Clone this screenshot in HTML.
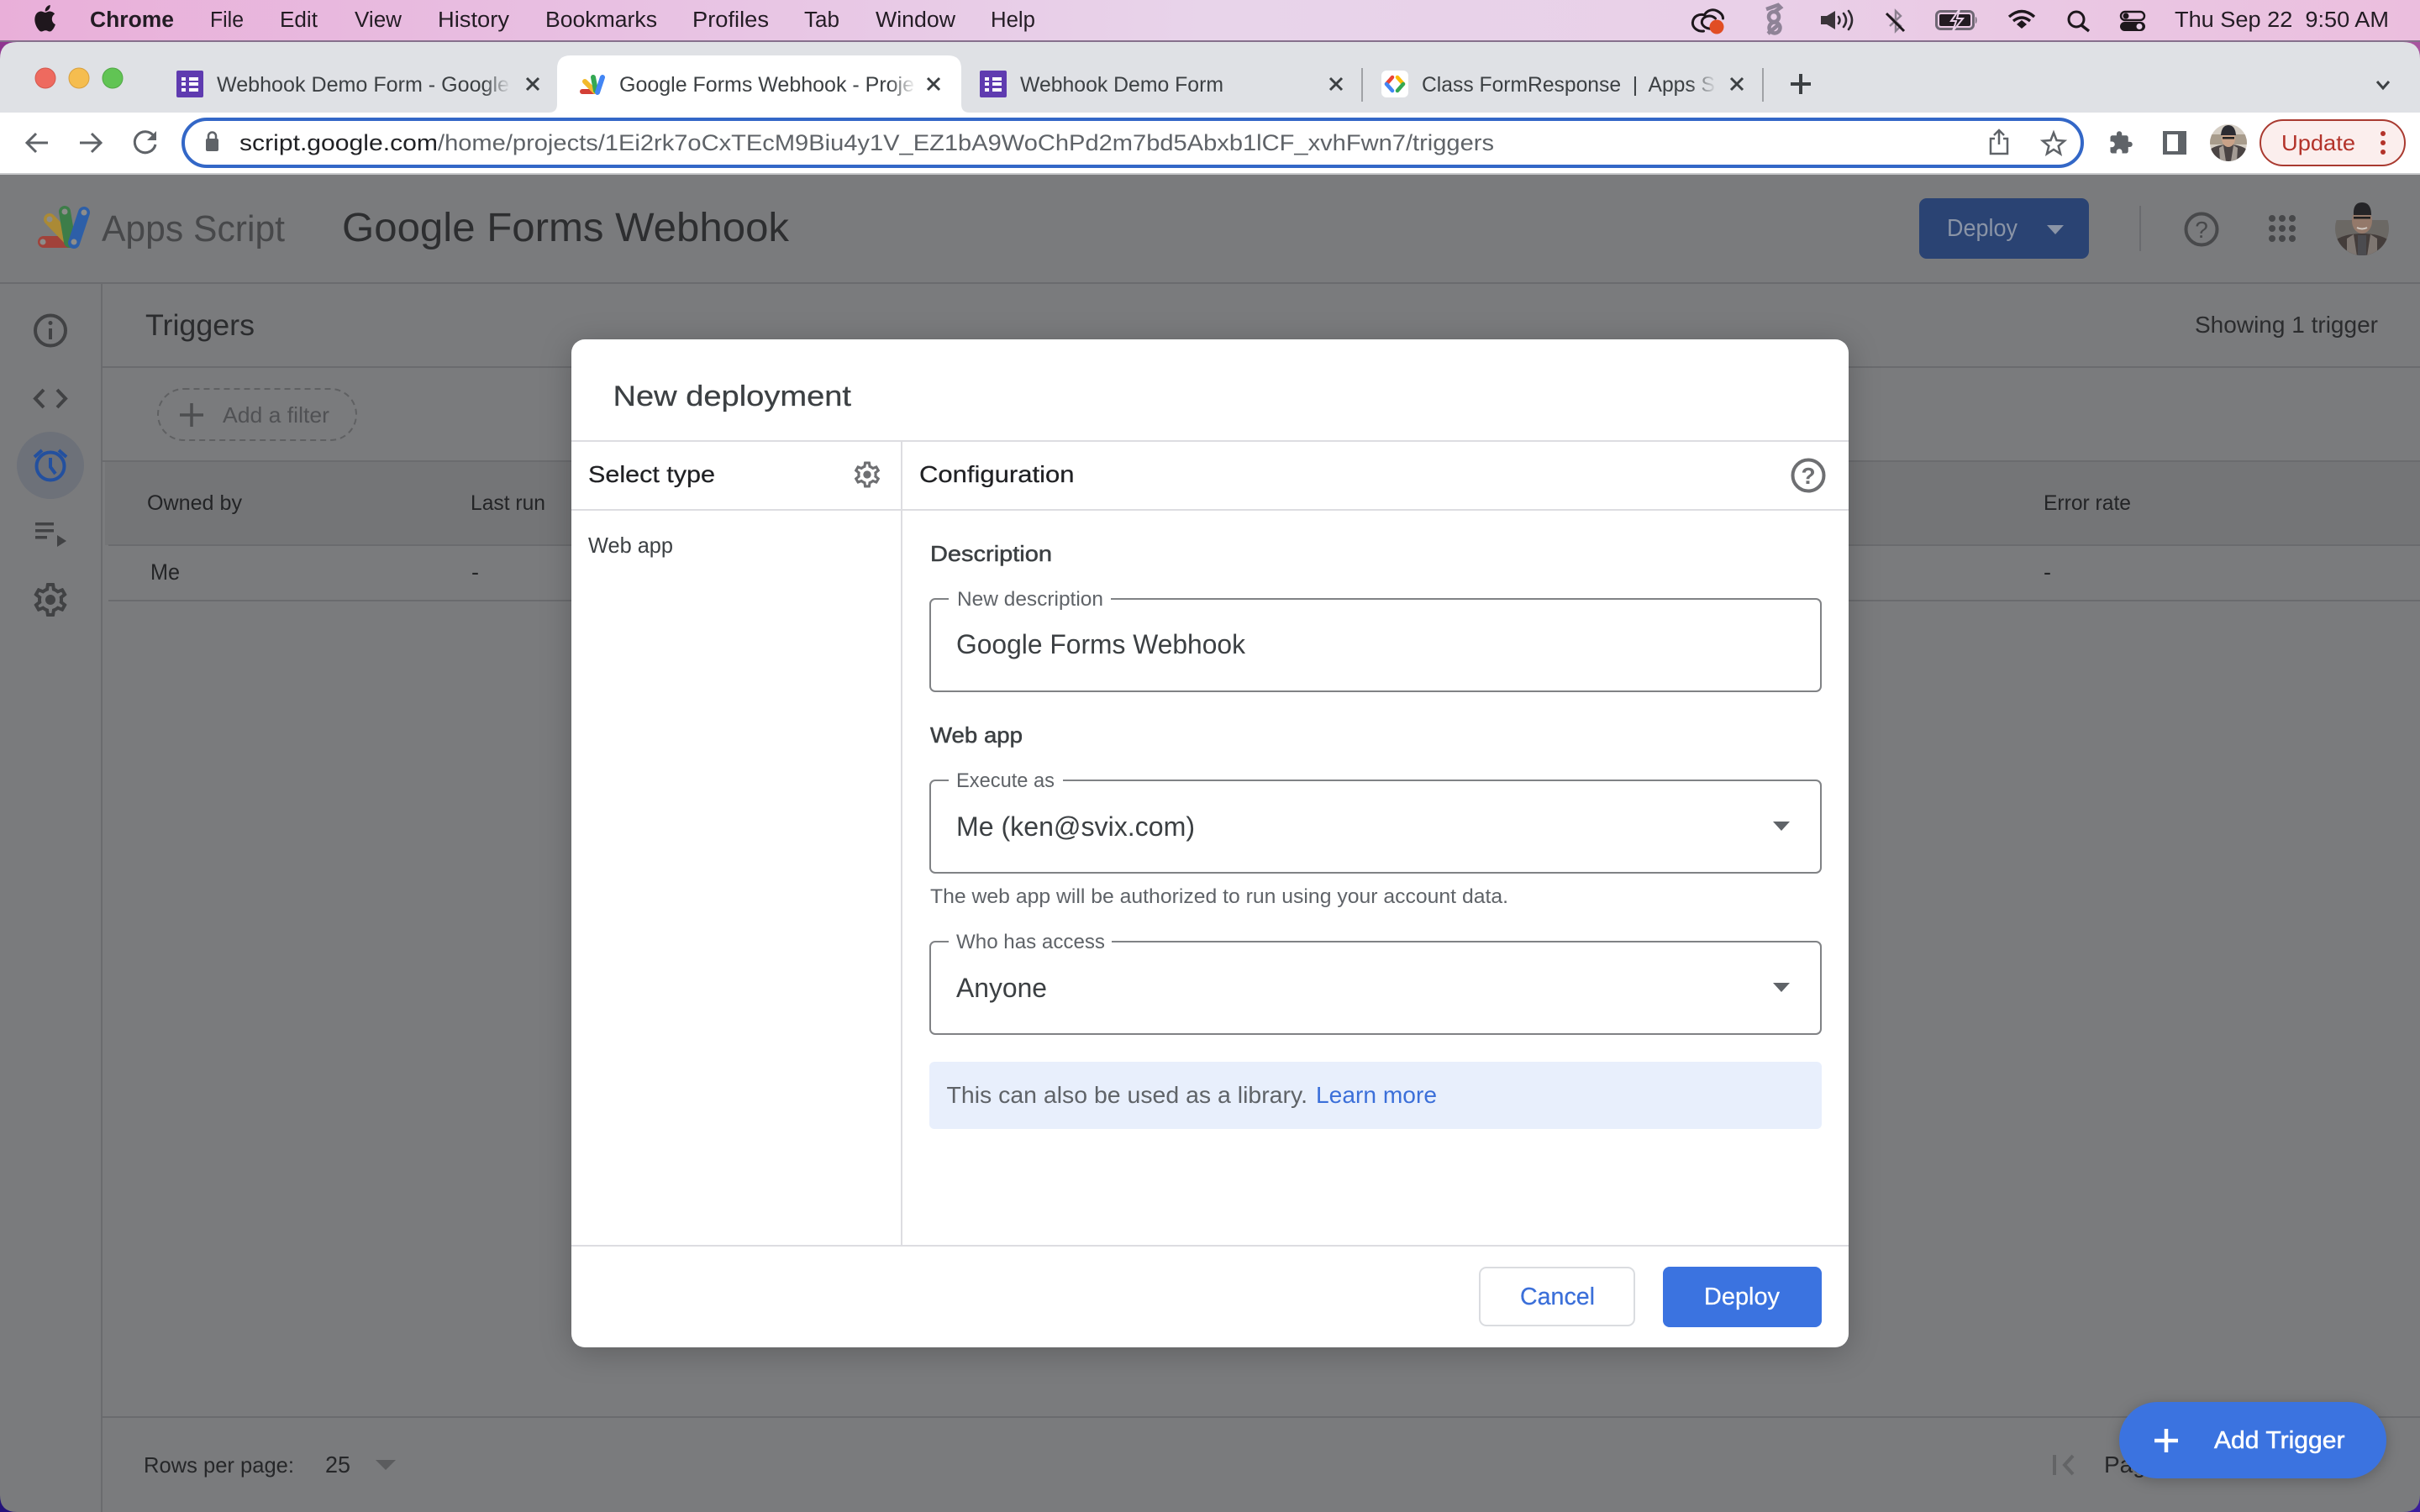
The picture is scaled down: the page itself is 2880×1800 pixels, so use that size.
<!DOCTYPE html>
<html lang="en"><head><meta charset="utf-8"><title>New deployment</title>
<style>
html,body{margin:0;padding:0;width:2880px;height:1800px;overflow:hidden;background:#7a7b7d}
svg{display:block}
text{font-family:"Liberation Sans",sans-serif;white-space:pre}
.m{stroke:currentColor;stroke-width:.5px}
.l{stroke:currentColor;stroke-width:.25px}
</style></head><body>
<svg xmlns="http://www.w3.org/2000/svg" width="2880" height="1800" viewBox="0 0 2880 1800">
<defs>
<linearGradient id="menu" x1="0" x2="1" y1="0" y2="0"><stop offset="0" stop-color="#e9afd9"/><stop offset=".25" stop-color="#e8c0e2"/><stop offset=".5" stop-color="#e8d4ea"/><stop offset=".72" stop-color="#e9d0e8"/><stop offset="1" stop-color="#ebbede"/></linearGradient>
<linearGradient id="fg"><stop offset="0" stop-color="#dfe1e5" stop-opacity="0"/><stop offset="1" stop-color="#dfe1e5"/></linearGradient>
<linearGradient id="fw"><stop offset="0" stop-color="#fff" stop-opacity="0"/><stop offset="1" stop-color="#fff"/></linearGradient>
<clipPath id="av1"><circle cx="2811" cy="272" r="32"/></clipPath>
<clipPath id="av2"><circle cx="2652" cy="170" r="22"/></clipPath>
</defs>

<!-- corners behind window -->
<rect x="0" y="40" width="40" height="40" fill="#8f3590"/>
<rect x="2840" y="40" width="40" height="40" fill="#a8559f"/>
<rect x="0" y="1760" width="40" height="40" fill="#24127a"/>
<rect x="2840" y="1760" width="40" height="40" fill="#3a1d9c"/>

<!-- menu bar -->
<rect x="0" y="0" width="2880" height="48" fill="url(#menu)"/>
<rect x="0" y="48" width="2880" height="2" fill="#86708c"/>
<path transform="translate(34.2 .75) scale(1.62 1.75)" fill="#1f171d" d="M17.05 20.28c-.98.95-2.05.8-3.08.35-1.09-.46-2.09-.48-3.24 0-1.44.62-2.2.44-3.06-.35C2.79 15.25 3.51 7.59 9.05 7.31c1.35.07 2.29.74 3.08.8 1.18-.24 2.31-.93 3.57-.84 1.51.12 2.65.72 3.4 1.8-3.12 1.87-2.38 5.98.48 7.13-.57 1.5-1.31 2.99-2.54 4.09zM12.03 7.25c-.15-2.23 1.66-4.07 3.74-4.25.29 2.58-2.34 4.5-3.74 4.25z"/>
<g font-size="25.5" fill="#231c24">
<text x="107" y="32" textLength="100" lengthAdjust="spacingAndGlyphs" font-weight="700">Chrome</text>
<text x="250" y="32" textLength="40" lengthAdjust="spacingAndGlyphs">File</text>
<text x="333" y="32" textLength="45" lengthAdjust="spacingAndGlyphs">Edit</text>
<text x="422" y="32" textLength="56" lengthAdjust="spacingAndGlyphs">View</text>
<text x="521" y="32" textLength="85" lengthAdjust="spacingAndGlyphs">History</text>
<text x="649" y="32" textLength="133" lengthAdjust="spacingAndGlyphs">Bookmarks</text>
<text x="824" y="32" textLength="91" lengthAdjust="spacingAndGlyphs">Profiles</text>
<text x="957" y="32" textLength="42" lengthAdjust="spacingAndGlyphs">Tab</text>
<text x="1042" y="32" textLength="95" lengthAdjust="spacingAndGlyphs">Window</text>
<text x="1179" y="32" textLength="53" lengthAdjust="spacingAndGlyphs">Help</text>
<text x="2588" y="32" textLength="255" lengthAdjust="spacingAndGlyphs">Thu Sep 22  9:50 AM</text>
</g>
<!-- status icons -->
<g fill="none" stroke="#1d171c" stroke-width="3" stroke-linecap="round" transform="translate(3.500 0)">
<path d="M2024 37c-8 1-14-5-13-11 1-7 8-10 14-8 2-5 9-8 15-5 4 2 7 5 7 9"/>
<path d="M2036 34c-6 1-12-1-14-6-1-5 3-9 9-9 3 0 5 1 7 3"/>
</g>
<circle cx="2043" cy="32" r="8.500" fill="#e14d24"/>
<g fill="none" stroke="#8f8397" stroke-width="4.500" transform="translate(8 0)">
<circle cx="2104" cy="33" r="6.500"/><circle cx="2103" cy="20" r="6"/>
<path d="M2094 11l14-5 3 3-7 5M2096 40l14-12"/>
</g>
<path d="M2167 19h7l10-6v22l-10-6h-7z" fill="#3a3339"/>
<g fill="none" stroke="#2d282e" stroke-width="2.600" stroke-linecap="round">
<path d="M2188 20q3 4 0 8M2194 16q6 8 0 16M2200 13q8 11 0 22"/>
</g>
<path d="M2249 19l13 12-6 6V13l6 6-13 12" fill="none" stroke="#8b808f" stroke-width="2.400"/>
<path d="M2245 16l21 21" stroke="#1d171c" stroke-width="3"/>
<rect x="2304.500" y="13.500" width="44" height="21" rx="5" fill="none" stroke="#6f6774" stroke-width="3"/>
<rect x="2308" y="17" width="37" height="14" rx="2" fill="#221b22"/>
<path d="M2351 20v8c2 0 2-8 0-8z" fill="#6f6774"/>
<path d="M2332 11l-10 14h6l-4 12 12-15h-7z" fill="#221b22" stroke="#e9d0e8" stroke-width="2"/>
<g fill="none" stroke="#1d171c" stroke-width="3.400">
<path d="M2391 20q15-13 30 0M2396 25q10-8 20 0"/>
</g>
<path d="M2400 29l6-5 6 5-6 5z" fill="#1d171c"/>
<circle cx="2471" cy="23" r="9" fill="none" stroke="#1d171c" stroke-width="3"/>
<path d="M2477 30l9 7" stroke="#1d171c" stroke-width="3.400"/>
<rect x="2524" y="14" width="28" height="10" rx="5" fill="none" stroke="#1d171c" stroke-width="2.400"/>
<circle cx="2530" cy="19" r="3.500" fill="#1d171c"/>
<rect x="2523" y="26" width="30" height="11" rx="5.500" fill="#1d171c"/>
<circle cx="2546" cy="31.500" r="3.500" fill="#e9d0e8"/>

<!-- window -->
<path d="M0 70Q0 50 20 50H2860Q2880 50 2880 70V134H0z" fill="#dfe1e5"/>
<circle cx="54" cy="93" r="12" fill="#ee6a5f" stroke="#d3584e"/>
<circle cx="94" cy="93" r="12" fill="#f5bd4f" stroke="#d8a03f"/>
<circle cx="134" cy="93" r="12" fill="#61c454" stroke="#51a845"/>

<!-- active tab -->
<path d="M653 134Q663 134 663 124V82Q663 66 679 66H1128Q1144 66 1144 82V124Q1144 134 1154 134z" fill="#fff"/>

<!-- tab 1 -->
<rect x="210" y="84" width="32" height="32" rx="2" fill="#5f3bb0"/>
<g fill="#fff"><rect x="216" y="92" width="5" height="4"/><rect x="216" y="98" width="5" height="4"/><rect x="216" y="105" width="5" height="4"/><rect x="225" y="92" width="11" height="4"/><rect x="225" y="98" width="11" height="4"/><rect x="225" y="105" width="11" height="4"/></g>
<g font-size="25" fill="#3c4043">
<text x="258" y="109" textLength="348" lengthAdjust="spacingAndGlyphs">Webhook Demo Form - Google</text>
<text x="737" y="109" textLength="351" lengthAdjust="spacingAndGlyphs">Google Forms Webhook - Proje</text>
<text x="1214" y="109" textLength="242" lengthAdjust="spacingAndGlyphs">Webhook Demo Form</text>
<text x="1692" y="109" textLength="349" lengthAdjust="spacingAndGlyphs">Class FormResponse  |  Apps S</text>
</g>
<rect x="576" y="84" width="32" height="34" fill="url(#fg)"/>
<rect x="1058" y="84" width="32" height="34" fill="url(#fw)"/>
<rect x="2011" y="84" width="32" height="34" fill="url(#fg)"/>
<g stroke="#3c4043" stroke-width="3" fill="none">
<path d="M627 93l14 14M641 93l-14 14M1104 93l14 14M1118 93l-14 14M1583 93l14 14M1597 93l-14 14M2060 93l14 14M2074 93l-14 14"/>
</g>
<!-- tab 2 favicon -->
<g fill="none" stroke-linecap="round" stroke-width="6">
<path d="M693 109H707" stroke="#d33f36"/>
<path d="M696 97L708 109" stroke="#f2ba2c"/>
<path d="M706 92L709 108" stroke="#34a853"/>
<path d="M717 92L711 110" stroke="#4285f4"/>
</g>
<!-- tab 3 -->
<rect x="1166" y="84" width="32" height="32" rx="2" fill="#5f3bb0"/>
<g fill="#fff"><rect x="1172" y="92" width="5" height="4"/><rect x="1172" y="98" width="5" height="4"/><rect x="1172" y="105" width="5" height="4"/><rect x="1181" y="92" width="11" height="4"/><rect x="1181" y="98" width="11" height="4"/><rect x="1181" y="105" width="11" height="4"/></g>
<!-- separators -->
<rect x="1620" y="81" width="2" height="40" fill="#a0a2a6"/>
<rect x="2097" y="81" width="2" height="40" fill="#a0a2a6"/>
<!-- tab 4 favicon -->
<rect x="1644" y="84" width="32" height="32" rx="6" fill="#fff"/>
<g fill="none" stroke-width="4.500" stroke-linecap="round">
<path d="M1657 92l-7 8" stroke="#ea4335"/><path d="M1650 100l7 8" stroke="#4285f4"/>
<path d="M1663 92l7 8" stroke="#fbbc05"/><path d="M1670 100l-7 8" stroke="#34a853"/>
</g>
<path d="M2143 88v24M2131 100h24" stroke="#3c4043" stroke-width="4"/>
<path d="M2829 97l7 8 7-8" fill="none" stroke="#3c4043" stroke-width="3"/>

<!-- toolbar -->
<rect x="0" y="134" width="2880" height="72" fill="#fff"/>
<rect x="0" y="206" width="2880" height="2" fill="#c9cacc"/>
<g fill="none" stroke="#5f6368" stroke-width="3">
<path d="M57 170H32M43 159L32 170L43 181"/>
<path d="M95 170H120M109 159L120 170L109 181"/>
<path d="M183 162a12.500 12.500 0 1 0 2 10"/>
</g>
<path d="M186 156v11h-11z" fill="#5f6368"/>
<rect x="218" y="142" width="2260" height="56" rx="28" fill="#fff" stroke="#3367c7" stroke-width="4"/>
<rect x="245" y="165" width="15" height="15" rx="2" fill="#5f6368"/>
<path d="M248 166v-4a4.500 4.500 0 0 1 9 0v4" fill="none" stroke="#5f6368" stroke-width="2.500"/>
<text x="285" y="179" font-size="27" fill="#202124" textLength="236" lengthAdjust="spacingAndGlyphs">script.google.com</text>
<text x="521" y="179" font-size="27" fill="#5f6368" textLength="1257" lengthAdjust="spacingAndGlyphs">/home/projects/1Ei2rk7oCxTEcM9Biu4y1V_EZ1bA9WoChPd2m7bd5Abxb1lCF_xvhFwn7/triggers</text>
<g fill="none" stroke="#5f6368" stroke-width="2.500">
<path d="M2374 165h-5v18h20v-18h-5M2379 172v-16M2373 161l6-6 6 6"/>
<path d="M2444 158l3.500 9 9.500.7-7.300 6.100 2.400 9.400-8.100-5.200-8.100 5.200 2.400-9.400-7.300-6.100 9.500-.7z"/>
</g>
<path transform="translate(2509 155) scale(1.25)" fill="#5f6368" d="M20.5 11H19V7c0-1.100-.9-2-2-2h-4V3.500C13 2.120 11.880 1 10.500 1S8 2.120 8 3.500V5H4c-1.100 0-1.990.9-1.990 2v3.800H3.500c1.490 0 2.700 1.210 2.700 2.700s-1.210 2.700-2.700 2.700H2V20c0 1.100.9 2 2 2h3.800v-1.500c0-1.490 1.210-2.700 2.700-2.700 1.490 0 2.700 1.210 2.700 2.700V22H17c1.100 0 2-.9 2-2v-4h1.500c1.380 0 2.500-1.120 2.500-2.500S21.880 11 20.500 11z"/>
<rect x="2574" y="156" width="28" height="28" fill="#5f6368"/><rect x="2579" y="160" width="13" height="20" fill="#fff"/>
<!-- small avatar -->
<g clip-path="url(#av2)">
<rect x="2630" y="148" width="44" height="44" fill="#d4cdc3"/>
<rect x="2630" y="160" width="44" height="12" fill="#a89c8c"/>
<path d="M2630 192v-14q8-6 22-6t22 6v14z" fill="#4a4444"/>
<path d="M2641 176l5-3 3 19h-7zM2663 176l-5-3-3 19h7z" fill="#a39b94"/>
<ellipse cx="2652" cy="165" rx="8" ry="10" fill="#c9a288"/>
<path d="M2643 161q1-12 9-12t9 12z" fill="#2c2c32"/>
<rect x="2645" y="163" width="14" height="2.500" fill="#222"/>
</g>
<rect x="2690" y="143" width="172" height="54" rx="27" fill="#fbeeed" stroke="#a93a30" stroke-width="2"/>
<text x="2715" y="179" font-size="26" fill="#b3332a" textLength="88" lengthAdjust="spacingAndGlyphs">Update</text>
<g fill="#b3332a"><circle cx="2836" cy="159" r="3"/><circle cx="2836" cy="170" r="3"/><circle cx="2836" cy="181" r="3"/></g>

<!-- page -->
<path d="M0 208H2880V1780Q2880 1800 2860 1800H20Q0 1800 0 1780z" fill="#7a7b7d"/>
<g fill="#6a6b6e">
<rect x="0" y="336" width="2880" height="2"/>
<rect x="120" y="338" width="2" height="1462"/>
<rect x="122" y="436" width="2758" height="2"/>
</g>
<rect x="125" y="549" width="2755" height="100" fill="#747577"/>
<g fill="#6a6b6e">
<rect x="122" y="548" width="2758" height="2"/>
<rect x="129" y="648" width="2751" height="2"/>
<rect x="129" y="714" width="2751" height="2"/>
<rect x="122" y="1686" width="2758" height="2"/>
</g>

<!-- logo -->
<g fill="none" stroke-linecap="round" stroke-width="14">
<path d="M85 288H52" stroke="#a1423a"/>
<path d="M85 288L59 261" stroke="#ab8a35"/>
<path d="M83 288L77 252" stroke="#3d7d49"/>
<path d="M88 289L100 253" stroke="#2d5fa8"/>
</g>
<g fill="#8d8d8b"><circle cx="51" cy="288" r="3.500"/><circle cx="59" cy="261" r="3.500"/><circle cx="77" cy="252" r="3.500"/><circle cx="100" cy="253" r="3.500"/><circle cx="88" cy="288" r="3.500"/></g>
<text x="121" y="287" font-size="44" fill="#47484a" textLength="218" lengthAdjust="spacingAndGlyphs">Apps Script</text>
<text x="407" y="287" font-size="48" fill="#2d2e30" textLength="532" lengthAdjust="spacingAndGlyphs">Google Forms Webhook</text>

<!-- deploy button top -->
<rect x="2284" y="236" width="202" height="72" rx="9" fill="#2a4373"/>
<text x="2317" y="281" font-size="29" fill="#8a94a6" textLength="84" lengthAdjust="spacingAndGlyphs">Deploy</text>
<path d="M2436 268h20l-10 11z" fill="#8a94a6"/>
<rect x="2546" y="245" width="2" height="54" fill="#6a6b6e"/>
<circle cx="2620" cy="273" r="18.500" fill="none" stroke="#48494b" stroke-width="4"/>
<text x="2620" y="283" font-size="28" fill="#48494b" text-anchor="middle">?</text>
<g fill="#47484a">
<circle cx="2704" cy="260" r="4"/><circle cx="2716" cy="260" r="4"/><circle cx="2728" cy="260" r="4"/>
<circle cx="2704" cy="272" r="4"/><circle cx="2716" cy="272" r="4"/><circle cx="2728" cy="272" r="4"/>
<circle cx="2704" cy="284" r="4"/><circle cx="2716" cy="284" r="4"/><circle cx="2728" cy="284" r="4"/>
</g>
<!-- big avatar -->
<g clip-path="url(#av1)">
<rect x="2779" y="262" width="64" height="44" fill="#6b6864"/>
<path d="M2779 304v-18q12-8 32-8t32 8v18z" fill="#443d3b"/>
<path d="M2793 284l8-5 4 26h-12zM2829 284l-8-5-4 26h12z" fill="#7e7671"/>
<path d="M2806 280h10v24h-10z" fill="#4b4b4f"/>
</g>
<ellipse cx="2811" cy="263" rx="12" ry="15" fill="#94796a"/>
<path d="M2801 256q-1-15 10-15t11 15z" fill="#242427"/>
<rect x="2801" y="258" width="20" height="2.500" fill="#1e1e1e"/>
<path d="M2805 271q6 3 12 0" stroke="#d0c8c0" stroke-width="2" fill="none"/>

<!-- rail icons -->
<g fill="none" stroke="#414244" stroke-width="4">
<circle cx="60" cy="393.500" r="18"/>
<path d="M60 391v13"/>
<path d="M52 464l-10 10.500 10 10.500M68 464l10 10.500-10 10.500"/>
</g>
<circle cx="60" cy="384.500" r="2.500" fill="#414244"/>
<circle cx="60" cy="554" r="40" fill="#6d7179"/>
<g fill="none" stroke="#23509f" stroke-width="4">
<circle cx="60" cy="555" r="16.500"/>
<path d="M60 545v11l6 8M41 544l9-8M79 544l-9-8"/>
</g>
<g fill="#414244">
<rect x="42" y="622" width="22" height="3.500"/><rect x="42" y="630" width="22" height="3.500"/><rect x="42" y="638" width="14" height="3.500"/>
<path d="M68 637l11 7-11 7z"/>
</g>
<path transform="translate(36 690) scale(2)" fill="#414244" d="M19.430 12.980c.04-.32.07-.64.07-.98 0-.34-.03-.66-.07-.98l2.110-1.650c.19-.15.24-.42.12-.64l-2-3.460c-.09-.16-.26-.25-.44-.25-.06 0-.12.01-.17.03l-2.490 1c-.52-.4-1.080-.73-1.690-.98l-.38-2.650C14.460 2.180 14.250 2 14 2h-4c-.25 0-.46.18-.49.42l-.38 2.650c-.61.25-1.170.59-1.690.98l-2.490-1c-.06-.02-.12-.03-.18-.03-.17 0-.34.09-.43.25l-2 3.460c-.13.22-.07.49.12.64l2.110 1.650c-.04.32-.07.65-.07.98 0 .33.03.66.07.98l-2.110 1.650c-.19.15-.24.42-.12.64l2 3.460c.09.16.26.25.44.25.06 0 .12-.01.17-.03l2.490-1c.52.4 1.080.73 1.690.98l.38 2.650c.03.24.24.42.49.42h4c.25 0 .46-.18.49-.42l.38-2.650c.61-.25 1.170-.59 1.690-.98l2.490 1c.06.02.12.03.18.03.17 0 .34-.09.43-.25l2-3.460c.12-.22.07-.49-.12-.64l-2.110-1.650zm-1.980-1.710c.04.31.05.52.05.73 0 .21-.02.43-.05.73l-.14 1.130.89.7 1.080.84-.7 1.210-1.270-.51-1.040-.42-.9.68c-.43.32-.84.56-1.250.73l-1.060.43-.16 1.130-.2 1.350h-1.400l-.19-1.350-.16-1.130-1.060-.43c-.43-.18-.83-.41-1.230-.71l-.91-.7-1.060.43-1.270.51-.7-1.210 1.080-.84.89-.7-.14-1.130c-.03-.31-.05-.54-.05-.74s.02-.43.05-.73l.14-1.130-.89-.7-1.080-.84.7-1.210 1.270.51 1.040.42.9-.68c.43-.32.84-.56 1.250-.73l1.060-.43.16-1.130.2-1.350h1.390l.19 1.350.16 1.130 1.060.43c.43.18.83.41 1.230.71l.91.7 1.060-.43 1.270-.51.7 1.210-1.070.85-.89.7.14 1.130zM12 9c-1.660 0-3 1.340-3 3s1.340 3 3 3 3-1.340 3-3-1.340-3-3-3z"/>

<!-- page text -->
<text x="173" y="399" font-size="35" fill="#2b2c2e" textLength="130" lengthAdjust="spacingAndGlyphs">Triggers</text>
<text x="2612" y="396" font-size="28" fill="#2b2c2e" textLength="218" lengthAdjust="spacingAndGlyphs">Showing 1 trigger</text>
<rect x="188" y="463" width="236" height="61" rx="30.500" fill="none" stroke="#5f6062" stroke-width="2" stroke-dasharray="7 5"/>
<path d="M228 480v28M214 494h28" stroke="#4d4e50" stroke-width="3.500"/>
<text x="265" y="503" font-size="26" fill="#505154" textLength="127" lengthAdjust="spacingAndGlyphs">Add a filter</text>
<g font-size="25" fill="#232426">
<text x="175" y="607" textLength="113" lengthAdjust="spacingAndGlyphs">Owned by</text>
<text x="560" y="607" textLength="89" lengthAdjust="spacingAndGlyphs">Last run</text>
<text x="2432" y="607" textLength="104" lengthAdjust="spacingAndGlyphs">Error rate</text>
<text x="179" y="690" font-size="27" textLength="35" lengthAdjust="spacingAndGlyphs">Me</text>
<text x="561" y="690" font-size="27">-</text>
<text x="2432" y="690" font-size="27">-</text>
</g>
<!-- footer -->
<g font-size="26" fill="#262729">
<text x="171" y="1753" textLength="179" lengthAdjust="spacingAndGlyphs">Rows per page:</text>
<text x="387" y="1753" font-size="28" textLength="30" lengthAdjust="spacingAndGlyphs">25</text>
<text x="2504" y="1753" font-size="28">Page</text>
</g>
<path d="M447 1738h24l-12 12z" fill="#5b5c5e"/>
<rect x="2443" y="1732" width="4" height="24" fill="#636466"/>
<path d="M2467 1733l-10 11 10 11" fill="none" stroke="#636466" stroke-width="4"/>

<!-- FAB -->
<rect x="2522" y="1669" width="318" height="91" rx="45.500" fill="#3b73e0" style="filter:drop-shadow(0 3px 8px rgba(0,0,0,.22))"/>
<path d="M2578 1701v28M2564 1715h28" stroke="#fff" stroke-width="4.500"/>
<text x="2635" y="1724" font-size="29" fill="#fff" class="m" style="color:#fff" textLength="155.500" lengthAdjust="spacingAndGlyphs">Add Trigger</text>

<!-- dialog -->
<rect x="680" y="404" width="1520" height="1200" rx="16" fill="#fff" style="filter:drop-shadow(0 6px 18px rgba(0,0,0,.22))"/>
<text x="729.500" y="483" font-size="34" fill="#3c4043" class="l" style="color:#3c4043" textLength="283.500" lengthAdjust="spacingAndGlyphs">New deployment</text>
<g fill="#dddde1">
<rect x="680" y="524" width="1520" height="2"/>
<rect x="680" y="606" width="1520" height="2"/>
<rect x="1072" y="526" width="2" height="957"/>
<rect x="680" y="1482" width="1520" height="2"/>
</g>
<text x="700" y="574" font-size="28" fill="#202124" class="l" style="color:#202124" textLength="151" lengthAdjust="spacingAndGlyphs">Select type</text>
<text x="1094" y="574" font-size="28" fill="#202124" class="l" style="color:#202124" textLength="184.500" lengthAdjust="spacingAndGlyphs">Configuration</text>
<path transform="translate(1013.400 546.400) scale(1.550)" fill="#6e6f72" d="M19.430 12.980c.04-.32.07-.64.07-.98 0-.34-.03-.66-.07-.98l2.110-1.650c.19-.15.24-.42.12-.64l-2-3.460c-.09-.16-.26-.25-.44-.25-.06 0-.12.01-.17.03l-2.490 1c-.52-.4-1.080-.73-1.690-.98l-.38-2.650C14.460 2.180 14.250 2 14 2h-4c-.25 0-.46.18-.49.42l-.38 2.650c-.61.25-1.170.59-1.690.98l-2.490-1c-.06-.02-.12-.03-.18-.03-.17 0-.34.09-.43.25l-2 3.460c-.13.22-.07.49.12.64l2.110 1.650c-.04.32-.07.65-.07.98 0 .33.03.66.07.98l-2.110 1.650c-.19.15-.24.42-.12.64l2 3.460c.09.16.26.25.44.25.06 0 .12-.01.17-.03l2.490-1c.52.4 1.080.73 1.690.98l.38 2.650c.03.24.24.42.49.42h4c.25 0 .46-.18.49-.42l.38-2.650c.61-.25 1.170-.59 1.690-.98l2.490 1c.06.02.12.03.18.03.17 0 .34-.09.43-.25l2-3.460c.12-.22.07-.49-.12-.64l-2.110-1.650zm-1.980-1.710c.04.31.05.52.05.73 0 .21-.02.43-.05.73l-.14 1.130.89.7 1.080.84-.7 1.210-1.270-.51-1.040-.42-.9.68c-.43.32-.84.56-1.250.73l-1.060.43-.16 1.130-.2 1.350h-1.400l-.19-1.350-.16-1.130-1.060-.43c-.43-.18-.83-.41-1.230-.71l-.91-.7-1.060.43-1.270.51-.7-1.210 1.080-.84.89-.7-.14-1.130c-.03-.31-.05-.54-.05-.74s.02-.43.05-.73l.14-1.130-.89-.7-1.080-.84.7-1.210 1.270.51 1.040.42.9-.68c.43-.32.84-.56 1.250-.73l1.060-.43.16-1.130.2-1.350h1.390l.19 1.350.16 1.130 1.060.43c.43.18.83.41 1.230.71l.91.7 1.060-.43 1.270-.51.7 1.210-1.070.85-.89.7.14 1.130zM12 9c-1.660 0-3 1.340-3 3s1.340 3 3 3 3-1.340 3-3-1.340-3-3-3z"/>
<circle cx="2152" cy="566" r="18.500" fill="none" stroke="#6e6f72" stroke-width="4"/>
<text x="2152" y="576" font-size="28" font-weight="700" fill="#6e6f72" text-anchor="middle">?</text>
<text x="700" y="658" font-size="26" fill="#3c4043" textLength="101" lengthAdjust="spacingAndGlyphs">Web app</text>
<text x="1107" y="668" font-size="26" fill="#3c4043" class="m" style="color:#3c4043" textLength="145" lengthAdjust="spacingAndGlyphs">Description</text>
<text x="1107" y="884" font-size="26" fill="#3c4043" class="m" style="color:#3c4043" textLength="110" lengthAdjust="spacingAndGlyphs">Web app</text>

<!-- fields -->
<g fill="none" stroke="#808285" stroke-width="2">
<rect x="1107" y="713" width="1060" height="110" rx="6"/>
<rect x="1107" y="929" width="1060" height="110" rx="6"/>
<rect x="1107" y="1121" width="1060" height="110" rx="6"/>
</g>
<g fill="#fff">
<rect x="1129" y="708" width="193" height="10"/>
<rect x="1129" y="924" width="136" height="10"/>
<rect x="1129" y="1116" width="194" height="10"/>
</g>
<g font-size="24" fill="#5f6368">
<text x="1139" y="721" textLength="174" lengthAdjust="spacingAndGlyphs">New description</text>
<text x="1138" y="937" textLength="117" lengthAdjust="spacingAndGlyphs">Execute as</text>
<text x="1138" y="1129" textLength="177" lengthAdjust="spacingAndGlyphs">Who has access</text>
<text x="1107" y="1075" font-size="24.500" textLength="688" lengthAdjust="spacingAndGlyphs">The web app will be authorized to run using your account data.</text>
</g>
<g font-size="32" fill="#3c4043">
<text x="1138" y="778" textLength="344" lengthAdjust="spacingAndGlyphs">Google Forms Webhook</text>
<text x="1138" y="995" textLength="284" lengthAdjust="spacingAndGlyphs">Me (ken@svix.com)</text>
<text x="1138" y="1187" textLength="108" lengthAdjust="spacingAndGlyphs">Anyone</text>
</g>
<path d="M2110 978h20l-10 11zM2110 1170h20l-10 11z" fill="#5f6368"/>

<!-- info -->
<rect x="1106" y="1264" width="1062" height="80" rx="6" fill="#e8effc"/>
<text x="1126.500" y="1313" font-size="27.500" fill="#5f6368" textLength="429.500" lengthAdjust="spacingAndGlyphs">This can also be used as a library.</text>
<text x="1566" y="1313" font-size="27.500" fill="#3b6fd9" textLength="144" lengthAdjust="spacingAndGlyphs">Learn more</text>

<!-- buttons -->
<rect x="1761" y="1509" width="184" height="69" rx="8" fill="#fff" stroke="#dadce0" stroke-width="2"/>
<text x="1809" y="1553" font-size="29" fill="#3b6fd9" class="l" style="color:#3b6fd9" textLength="89" lengthAdjust="spacingAndGlyphs">Cancel</text>
<rect x="1979" y="1508" width="189" height="72" rx="8" fill="#3b73e0"/>
<text x="2028" y="1553" font-size="29" fill="#fff" class="l" style="color:#fff" textLength="90" lengthAdjust="spacingAndGlyphs">Deploy</text>
</svg>
</body></html>
